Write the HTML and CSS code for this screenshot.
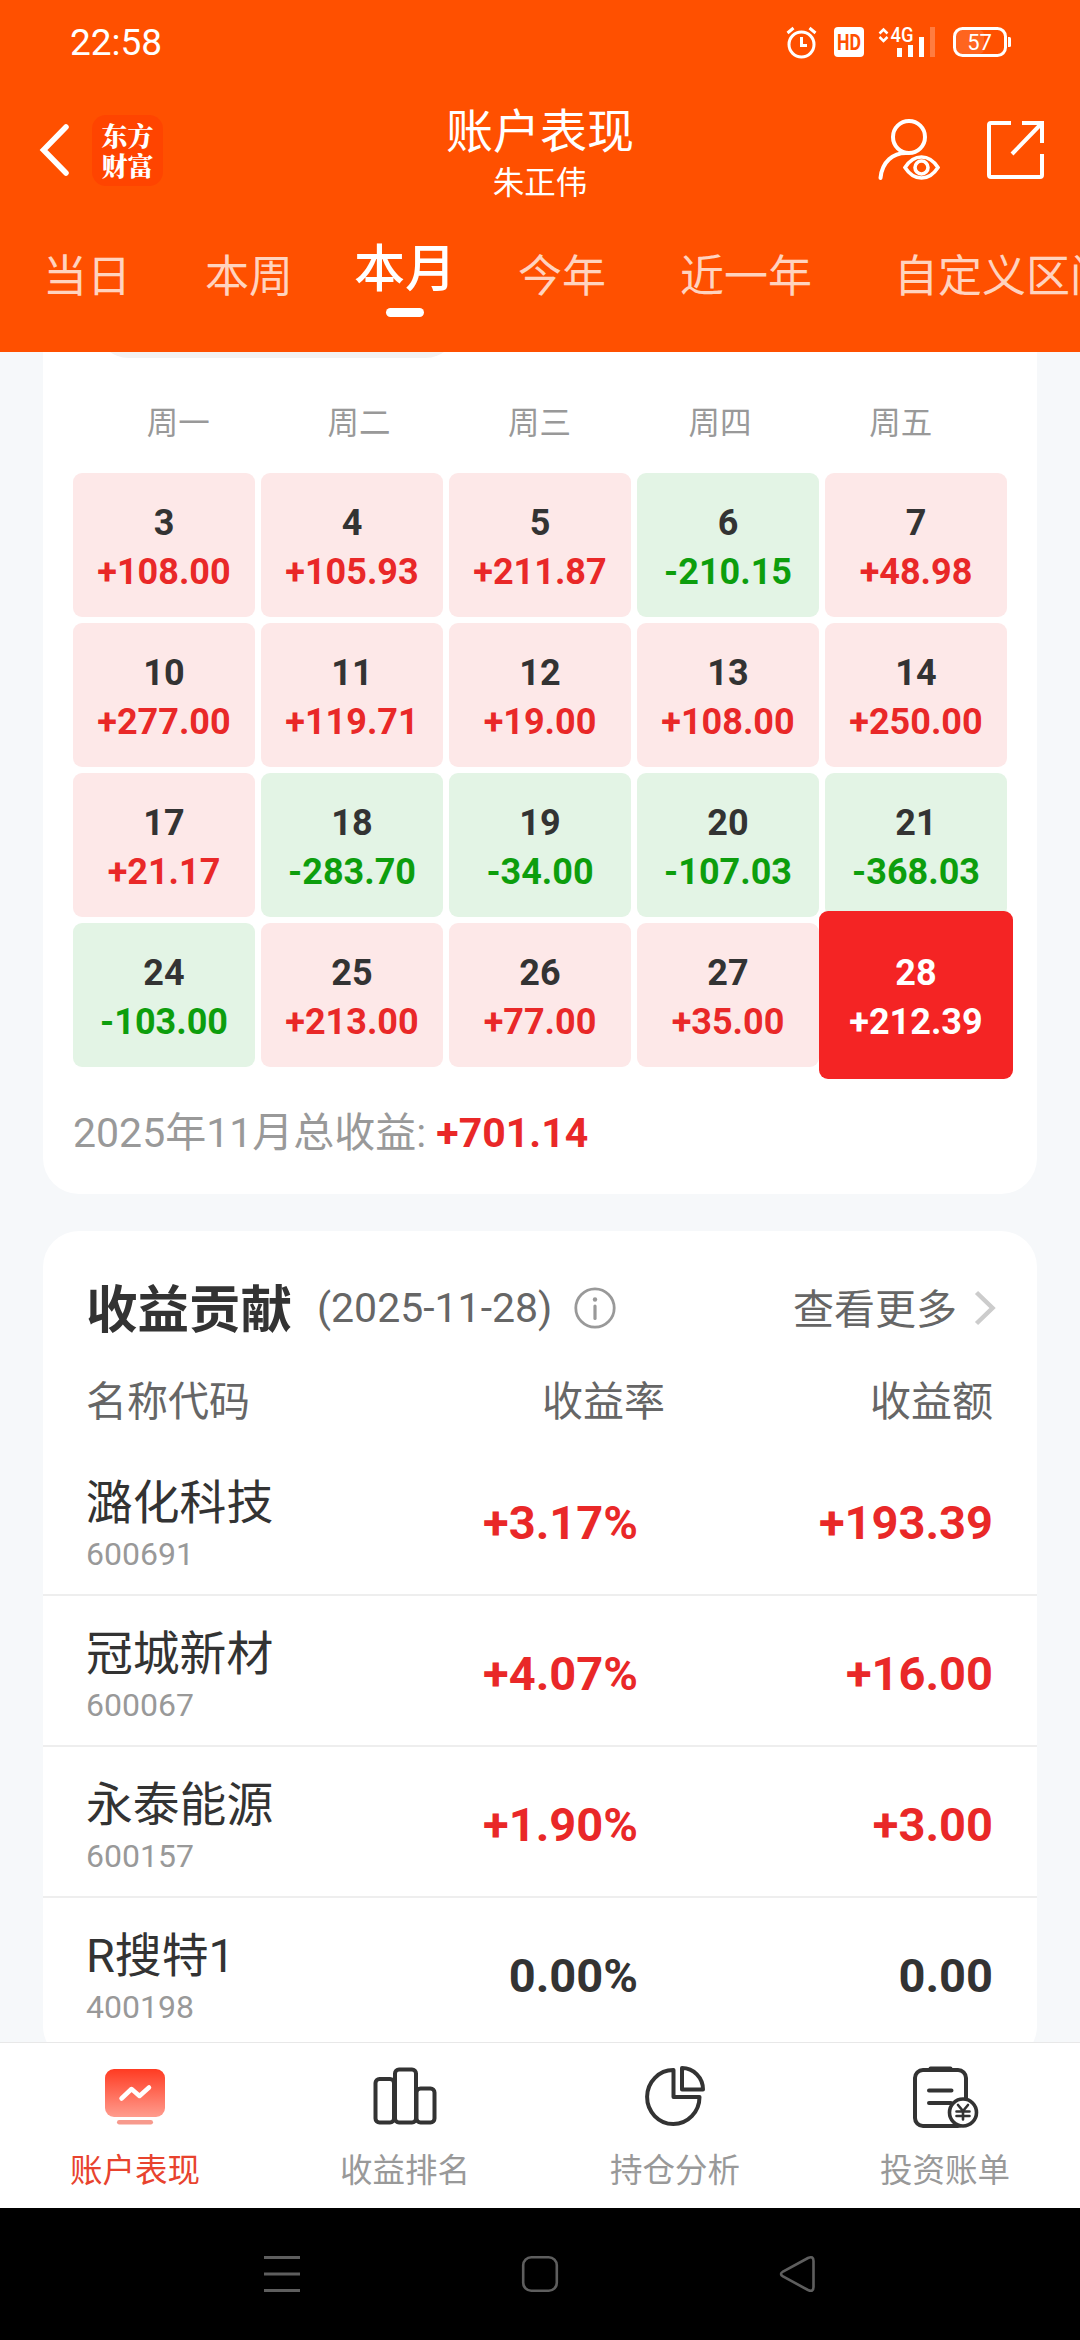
FILE: index.html
```html
<!DOCTYPE html>
<html lang="zh-CN">
<head>
<meta charset="UTF-8">
<title>账户表现</title>
<link rel="stylesheet" href="styles.css">
</head>
<body>
<div class="screen">
  <header class="header">
    <div class="status">
      <span class="clock">22:58</span>
      <svg class="status-icons" width="230" height="40" viewBox="785 22 230 40" fill="none" stroke="#fff">
        <g stroke-width="3">
          <circle cx="801.500" cy="44.500" r="12.500"/>
          <path d="M801.500 37v8.500h5.500"/>
          <path d="M787.500 33l6-5M815.500 33l-6-5"/>
        </g>
        <rect x="834" y="27" width="30" height="30" rx="4" fill="#fff" stroke="none"/>
        <text class="hd" x="849" y="50" textLength="24" lengthAdjust="spacingAndGlyphs">HD</text>
        <path d="M879.500 33.500l4-4 4 4M879.500 37l4 4 4-4" stroke-width="2.500"/>
        <text class="net" x="902" y="42" textLength="23" lengthAdjust="spacingAndGlyphs">4G</text>
        <g fill="#fff" stroke="none">
          <rect x="897" y="48" width="5" height="9"/>
          <rect x="908" y="45" width="5" height="12"/>
          <rect x="919" y="37" width="5" height="20"/>
          <rect x="930" y="27" width="5" height="30" opacity=".25"/>
          <rect x="956" y="30" width="28" height="24" rx="5" opacity=".12"/>
          <path d="M1008 37h1.500a1.500 1.500 0 0 1 1.500 1.500v7a1.500 1.500 0 0 1-1.500 1.500h-1.500z"/>
        </g>
        <rect x="954.500" y="28.500" width="51" height="27" rx="8" stroke-width="3"/>
        <text class="battery" x="979.500" y="49.500">57</text>
      </svg>
    </div>
    <div class="titlebar">
      <div class="title-left">
        <svg width="32" height="56" viewBox="0 0 32 56" fill="none" stroke="#fff" stroke-width="5.500" stroke-linecap="round"><path d="M27 5L4.500 28 27 51"/></svg>
        <span class="logo"><span>东方</span><span>财富</span></span>
      </div>
      <div class="title-center">
        <h1>账户表现</h1>
        <p>朱正伟</p>
      </div>
      <div class="title-right">
        <svg width="62" height="64" viewBox="878 118 62 64" fill="none" stroke="#fff" stroke-width="4" stroke-linecap="round">
          <circle cx="909" cy="137" r="16"/>
          <path d="M880.500 178C882 162 893 152.500 907 153"/>
          <path d="M905 167.500C914 153.500 929 153.500 938 167.500C929 181.500 914 181.500 905 167.500Z" stroke-width="3.600"/>
          <circle cx="921.500" cy="167.500" r="6.500" stroke-width="3.600"/>
        </svg>
        <svg width="62" height="64" viewBox="985 118 62 64" fill="none" stroke="#fff" stroke-width="4">
          <path d="M1011 123h-20a2 2 0 0 0-2 2v50a2 2 0 0 0 2 2h49a2 2 0 0 0 2-2v-21M1022 123h20v20M1041 124l-29 30"/>
        </svg>
      </div>
    </div>
    <nav class="tabs">
      <span>当日</span>
      <span>本周</span>
      <span class="active">本月</span>
      <span>今年</span>
      <span>近一年</span>
      <span class="custom">自定义区间</span>
    </nav>
  </header>

  <main class="content">
    <section class="card calendar">
      <div class="switcher"></div>
      <div class="weekdays"><span>周一</span><span>周二</span><span>周三</span><span>周四</span><span>周五</span></div>
      <div class="days">
        <div class="day up"><b>3</b><span>+108.00</span></div>
        <div class="day up"><b>4</b><span>+105.93</span></div>
        <div class="day up"><b>5</b><span>+211.87</span></div>
        <div class="day down"><b>6</b><span>-210.15</span></div>
        <div class="day up"><b>7</b><span>+48.98</span></div>
        <div class="day up"><b>10</b><span>+277.00</span></div>
        <div class="day up"><b>11</b><span>+119.71</span></div>
        <div class="day up"><b>12</b><span>+19.00</span></div>
        <div class="day up"><b>13</b><span>+108.00</span></div>
        <div class="day up"><b>14</b><span>+250.00</span></div>
        <div class="day up"><b>17</b><span>+21.17</span></div>
        <div class="day down"><b>18</b><span>-283.70</span></div>
        <div class="day down"><b>19</b><span>-34.00</span></div>
        <div class="day down"><b>20</b><span>-107.03</span></div>
        <div class="day down"><b>21</b><span>-368.03</span></div>
        <div class="day down"><b>24</b><span>-103.00</span></div>
        <div class="day up"><b>25</b><span>+213.00</span></div>
        <div class="day up"><b>26</b><span>+77.00</span></div>
        <div class="day up"><b>27</b><span>+35.00</span></div>
        <div class="day selected"><b>28</b><span>+212.39</span></div>
      </div>
      <p class="total">2025年11月总收益: <strong>+701.14</strong></p>
    </section>

    <section class="card contribution">
      <div class="card-head">
        <h2>收益贡献</h2>
        <span class="date">(2025-11-28)</span>
        <svg width="42" height="42" viewBox="0 0 42 42" fill="none" stroke="#999" stroke-width="2.800" stroke-linecap="round"><circle cx="21" cy="21" r="19.200"/><path d="M21 19v12.500" stroke-width="3.200"/><circle cx="21" cy="12.500" r="2.200" fill="#999" stroke="none"/></svg>
        <span class="more">查看更多</span>
        <svg width="22" height="36" viewBox="0 0 22 36" fill="none" stroke="#ccc" stroke-width="4.500"><path d="M2.500 2.500L18.500 18 2.500 33.500"/></svg>
      </div>
      <div class="row columns"><span>名称代码</span><span>收益率</span><span>收益额</span></div>
      <div class="row stock gain"><div><p>潞化科技</p><small>600691</small></div><b>+3.17%</b><b>+193.39</b></div>
      <div class="row stock gain"><div><p>冠城新材</p><small>600067</small></div><b>+4.07%</b><b>+16.00</b></div>
      <div class="row stock gain"><div><p>永泰能源</p><small>600157</small></div><b>+1.90%</b><b>+3.00</b></div>
      <div class="row stock"><div><p>R搜特1</p><small>400198</small></div><b>0.00%</b><b>0.00</b></div>
    </section>
  </main>

  <nav class="tabbar">
    <div class="item active">
      <svg width="70" height="66" viewBox="100 2063 70 66" fill="none">
        <defs><linearGradient id="fade" x1="0" y1="0" x2="0" y2="1"><stop offset="0" stop-color="#ff3b22"/><stop offset="1" stop-color="#ff9c8e"/></linearGradient></defs>
        <rect x="105" y="2069" width="60" height="48" rx="9" fill="url(#fade)"/>
        <rect x="117" y="2120" width="36" height="4.500" rx="2.200" fill="#f79a8d"/>
        <path d="M121.500 2098.500l10-9.500 8 7 9.500-8.500" stroke="#fff" stroke-width="4.500" stroke-linecap="round" stroke-linejoin="round"/>
      </svg>
      <span>账户表现</span>
    </div>
    <div class="item">
      <svg width="70" height="66" viewBox="370 2063 70 66" fill="none" stroke="#333" stroke-width="4">
        <rect x="375.500" y="2079" width="18.500" height="43.500" rx="4"/>
        <rect x="395" y="2069.500" width="21" height="53" rx="4"/>
        <rect x="416.500" y="2088.500" width="18" height="34" rx="4"/>
      </svg>
      <span>收益排名</span>
    </div>
    <div class="item">
      <svg width="70" height="66" viewBox="640 2063 70 66" fill="none" stroke="#333" stroke-width="4" stroke-linejoin="round">
        <path d="M673.500 2070v27h26a26.200 27 0 1 1-26-27z"/>
        <path d="M682 2068v21.500h21a21 21.500 0 0 0-21-21.500z"/>
      </svg>
      <span>持仓分析</span>
    </div>
    <div class="item">
      <svg width="70" height="66" viewBox="910 2063 70 66" fill="none" stroke="#333" stroke-width="4" stroke-linecap="round">
        <rect x="915" y="2070" width="51" height="56" rx="8"/>
        <path d="M930.500 2068.500h20M929 2090.500h22.500M929 2103h22"/>
        <circle cx="963" cy="2112.500" r="13.500" fill="#fff" stroke-width="3.600"/>
        <path d="M958 2105l5 6 5-6M963 2111v8.500M956.500 2111.500h13M956.500 2116h13" stroke-width="2.600"/>
      </svg>
      <span>投资账单</span>
    </div>
  </nav>

  <div class="sysnav">
    <svg width="38" height="40" viewBox="0 0 38 40" stroke="#5e5e5e" stroke-width="3"><path d="M1 3.500h36M1 20h36M1 36.500h36"/></svg>
    <svg width="38" height="40" viewBox="0 0 38 40" fill="none" stroke="#5e5e5e" stroke-width="2.600"><rect x="2.200" y="3.300" width="33.600" height="33.400" rx="8"/></svg>
    <svg width="38" height="40" viewBox="0 0 38 40" fill="none" stroke="#5e5e5e" stroke-width="2.600"><path d="M4 17.500Q0 20 4 22.500L29 36Q34.500 38.500 34.500 33V7Q34.500 1.500 29 4Z"/></svg>
  </div>
</div>
</body>
</html>
```
FILE: styles.css
```css
* {
  box-sizing: border-box;
  margin: 0;
  padding: 0;
}

body {
  font-family: Roboto, "Noto Sans CJK SC", sans-serif;
  color: #333;
}

svg {
  display: block;
  flex: none;
}

.screen {
  display: flex;
  flex-direction: column;
  width: 1080px;
  height: 2340px;
  overflow: hidden;
  background: #f6f8fa;
}

/* Header */
.header {
  flex: none;
  height: 352px;
  overflow: hidden;
  background: #ff5000;
  color: #fff;
}

.status {
  display: flex;
  justify-content: space-between;
  align-items: center;
  height: 84px;
  padding: 0 65px 0 70px;
}

.clock {
  font-size: 37px;
}

.status-icons text {
  fill: #fff;
  stroke: none;
  text-anchor: middle;
}

.status-icons .hd {
  fill: #ff5000;
  font-size: 22px;
  font-weight: 700;
}

.status-icons .net {
  font-size: 20px;
  font-weight: 500;
}

.status-icons .battery {
  font-size: 22px;
}

.titlebar {
  display: grid;
  grid-template-columns: 1fr auto 1fr;
  height: 144px;
  padding: 0 33px;
}

.title-left {
  display: flex;
  align-items: center;
  gap: 21px;
  height: 132px;
  padding-left: 6px;
}

.logo {
  display: flex;
  flex-direction: column;
  justify-content: center;
  width: 71px;
  height: 71px;
  border-radius: 14px;
  background: #ff4400;
  font: 900 26px/30px "Noto Serif CJK SC", "Noto Sans CJK SC", sans-serif;
  text-align: center;
}

.title-center {
  padding-top: 18px;
  text-align: center;
}

.title-center h1 {
  font-size: 47px;
  font-weight: 400;
  line-height: 60px;
}

.title-center p {
  font-size: 31.5px;
  line-height: 44px;
}

.title-right {
  display: flex;
  justify-content: flex-end;
  align-items: center;
  gap: 45px;
  height: 132px;
}

.tabs {
  display: flex;
  gap: 74px;
  padding-left: 43px;
  font-size: 44px;
  line-height: 98px;
  white-space: nowrap;
  color: rgba(255, 255, 255, .75);
}

.tabs .active {
  display: flex;
  flex-direction: column;
  align-items: center;
  margin: 0 -12px 0 -13px;
  padding-top: 2px;
  color: #fff;
  font-size: 51px;
  font-weight: 500;
  line-height: 80px;
}

.tabs .custom {
  margin-left: 8px;
}

.tabs .active::after {
  content: "";
  width: 38px;
  height: 9px;
  margin-top: -2px;
  border-radius: 5px;
  background: #fff;
}

/* Cards */
.content {
  display: flex;
  flex: 1;
  flex-direction: column;
  gap: 37px;
  min-height: 0;
  padding: 0 43px;
  overflow: hidden;
}

.card {
  flex: none;
  border-radius: 0 0 36px 36px;
  background: #fff;
}

.calendar {
  height: 842px;
  padding: 0 30px;
}

.switcher {
  width: 362px;
  height: 66px;
  margin: -60px 0 0 23px;
  border-radius: 33px;
  background: #f2f2f2;
}

.weekdays {
  display: flex;
  height: 115px;
  padding: 43px 16px 0 15px;
  color: #999;
  font-size: 31.5px;
  line-height: 46px;
  text-align: center;
}

.weekdays span {
  flex: 1;
}

.days {
  display: grid;
  grid-template-columns: repeat(5, 182px);
  grid-auto-rows: 144px;
  gap: 6px;
}

.day {
  display: flex;
  flex-direction: column;
  align-items: center;
  justify-content: center;
  padding-top: 6px;
  border-radius: 9px;
  font-size: 36px;
  font-weight: 700;
  line-height: 49px;
}

.day b {
  font-weight: 700;
}

.up span, .gain > b, .total strong {
  color: #e92828;
}

.day.up {
  background: #fde8e8;
}

.day.down {
  background: #e3f4e5;
}

.day.down span {
  color: #0d9e0d;
}

.day.selected {
  margin: -12px -6px;
  background: #f42424;
  color: #fff;
}

.total {
  padding-top: 36px;
  color: #999;
  font-size: 41px;
  line-height: 60px;
}

/* Contribution list */
.contribution {
  height: 831px;
  border-radius: 36px;
}

.card-head {
  display: flex;
  align-items: center;
  height: 134px;
  padding: 20px 41px 0 43px;
  color: #666;
  font-size: 41px;
}

.card-head h2 {
  margin-right: 25px;
  padding-bottom: 6px;
  color: #333;
  font-size: 51.5px;
  font-weight: 700;
}

.date {
  margin-right: 22px;
}

.more {
  margin: 0 17px 0 auto;
  padding-bottom: 4px;
}

.row {
  display: grid;
  grid-template-columns: 300px 1fr 355px;
  align-items: center;
  padding: 0 44px 0 43px;
}

.row > :not(:first-child) {
  text-align: right;
}

.columns {
  height: 80px;
  padding-bottom: 14px;
  color: #666;
  font-size: 41px;
}

.columns span:nth-child(2) {
  margin-right: -27px;
}

.stock {
  height: 151px;
  border-bottom: 2px solid #eee;
}

.stock:last-child {
  border-color: transparent;
}

.stock > div {
  padding-top: 13px;
}

.stock p {
  font-size: 46.8px;
  line-height: 56px;
}

.stock small {
  display: block;
  color: #999;
  font-size: 32px;
  line-height: 46px;
}

.stock b {
  padding-top: 6px;
  font-size: 47px;
}

/* Bottom navigation */
.tabbar {
  display: flex;
  flex: none;
  height: 166px;
  border-top: 1px solid #e8e8e8;
  background: #fff;
}

.item {
  display: flex;
  flex: 1;
  flex-direction: column;
  align-items: center;
  gap: 17px;
  padding-top: 20px;
  color: #999;
  font-size: 32.5px;
  line-height: 50px;
}

.item.active {
  color: #e8432e;
}

.sysnav {
  display: flex;
  flex: none;
  justify-content: center;
  gap: 220px;
  height: 132px;
  padding-top: 46px;
  background: #000;
}
```
